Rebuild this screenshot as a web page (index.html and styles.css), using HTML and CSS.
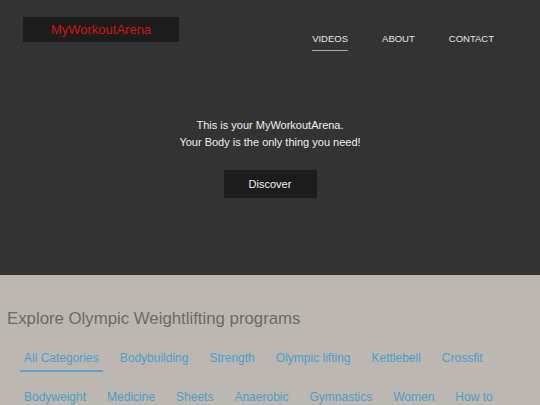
FILE: index.html
```html
<!DOCTYPE html>
<html>
<head>
<meta charset="utf-8">
<link rel="stylesheet" href="styles.css">
</head>
<body>
<section class="hero">
  <header class="topbar">
    <div class="logo">MyWorkoutArena</div>
    <nav class="nav">
      <a class="nav-link active">VIDEOS</a>
      <a class="nav-link">ABOUT</a>
      <a class="nav-link">CONTACT</a>
    </nav>
  </header>
  <div class="hero-body">
    <p class="hero-text">This is your MyWorkoutArena.<br>Your Body is the only thing you need!</p>
    <button class="btn">Discover</button>
  </div>
</section>
<section class="explore">
  <h2 class="explore-title">Explore Olympic Weightlifting programs</h2>
  <ul class="tabs">
    <li class="tab active">All Categories</li>
    <li class="tab">Bodybuilding</li>
    <li class="tab">Strength</li>
    <li class="tab">Olympic lifting</li>
    <li class="tab">Kettlebell</li>
    <li class="tab">Crossfit</li>
    <li class="tab">Bodyweight</li>
    <li class="tab">Medicine</li>
    <li class="tab">Sheets</li>
    <li class="tab">Anaerobic</li>
    <li class="tab">Gymnastics</li>
    <li class="tab">Women</li>
    <li class="tab">How to</li>
    <li class="tab">Nutrition</li>
  </ul>
</section>
</body>
</html>
```
FILE: styles.css
```css
* { box-sizing: border-box; }
html, body { margin: 0; padding: 0; }
body {
  font-family: "Liberation Sans", Arial, sans-serif;
  background: #bcb8b1;
  width: 540px;
  overflow: hidden;
}
.hero {
  background: #333333;
  height: 275px;
  display: flex;
  flex-direction: column;
}
.topbar {
  display: flex;
  justify-content: space-between;
  align-items: flex-start;
  padding: 17px 0 0 23px;
}
.logo {
  width: 156px;
  height: 25px;
  background: #1c1c1c;
  color: #d01616;
  font-size: 13px;
  line-height: 25px;
  text-align: center;
}
.nav {
  display: flex;
  gap: 34px;
  padding-top: 16px;
  padding-right: 46px;
}
.nav-link {
  color: #e6e6e6;
  font-size: 9.5px;
  line-height: 12px;
  padding-bottom: 5px;
  border-bottom: 1px solid transparent;
}
.nav-link.active {
  border-bottom: 1px solid #a9a9a9;
}
.hero-body {
  display: flex;
  flex-direction: column;
  align-items: center;
  padding-top: 66px;
}
.hero-text {
  margin: 0;
  color: #f0f0f0;
  font-size: 11px;
  line-height: 17px;
  text-align: center;
}
.btn {
  margin-top: 19px;
  width: 93px;
  height: 28px;
  background: #1c1c1c;
  color: #f0f0f0;
  border: none;
  font-family: inherit;
  font-size: 11px;
  padding: 0;
}
.explore {
  padding: 34px 0 0 7px;
}
.explore-title {
  margin: 0;
  font-weight: normal;
  font-size: 16.8px;
  line-height: 20px;
  color: #6a6a6a;
}
.tabs {
  list-style: none;
  margin: 16px 0 0 0;
  padding: 0 0 0 13px;
  width: 520px;
  display: flex;
  flex-wrap: wrap;
  column-gap: 13px;
  row-gap: 12px;
}
.tab {
  color: #4b9dc9;
  font-size: 12px;
  line-height: 14px;
  padding: 6px 4px 5px;
  border-bottom: 2px solid transparent;
}
.tab.active {
  border-bottom: 2px solid #5aa3cc;
}
```
